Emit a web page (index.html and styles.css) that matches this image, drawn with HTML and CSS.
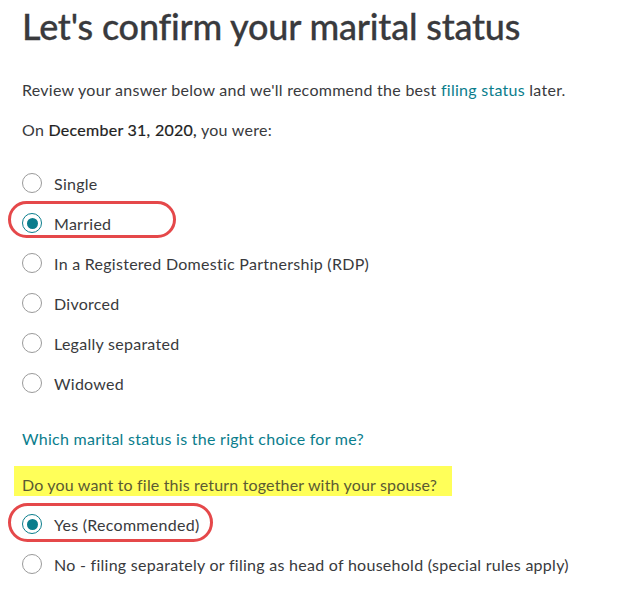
FILE: index.html
```html
<!DOCTYPE html>
<html lang="en">
<head>
    <meta charset="UTF-8">
    <meta name="viewport" content="width=device-width, initial-scale=1.0">
    <title>Marital status</title>
    <link rel="stylesheet" href="styles.css">
</head>
<body>
    <div class="page">
        <h1>Let's confirm your marital status</h1>

        <p class="intro">Review your answer below and we'll recommend the best <a href="#">filing status</a> later.</p>

        <p class="question">On <strong>December 31, 2020,</strong> you were:</p>

        <div class="options">
            <label class="option"><span class="radio"></span>Single</label>
            <label class="option"><span class="radio checked"></span>Married<span class="mark mark-married"></span></label>
            <label class="option"><span class="radio"></span>In a Registered Domestic Partnership (RDP)</label>
            <label class="option"><span class="radio"></span>Divorced</label>
            <label class="option"><span class="radio"></span>Legally separated</label>
            <label class="option"><span class="radio"></span>Widowed</label>
        </div>

        <a class="help" href="#">Which marital status is the right choice for me?</a>

        <div class="highlight">Do you want to file this return together with your spouse?</div>

        <div class="options">
            <label class="option"><span class="radio checked"></span>Yes (Recommended)<span class="mark mark-yes"></span></label>
            <label class="option"><span class="radio"></span>No - filing separately or filing as head of household (special rules apply)</label>
        </div>
    </div>
</body>
</html>
```

FILE: styles.css
```css
body {
    margin: 0;
    background: #fff;
    font-family: Lato, "Noto Sans", sans-serif;
    font-size: 16px;
    letter-spacing: 0.27px;
    color: #393a3d;
}

.page {
    padding: 0 0 0 22px;
}

h1 {
    margin: 0;
    padding-top: 4px;
    font-size: 36px;
    font-weight: 500;
    line-height: 44px;
    letter-spacing: -0.2px;
    -webkit-text-stroke: 0.3px #393a3d;
}

.intro {
    margin: 32px 0 0;
    line-height: 20px;
}

.intro a,
.help {
    color: #0a7d8c;
    text-decoration: none;
}

.question {
    margin: 20px 0 0;
    line-height: 20px;
}

.question strong {
    font-weight: 400;
    color: #222;
    -webkit-text-stroke: 0.2px #222;
}

.options {
    display: flex;
    flex-direction: column;
    margin-top: 23px;
}

.option {
    position: relative;
    display: flex;
    align-items: center;
    gap: 12px;
    height: 40px;
}

.radio {
    box-sizing: border-box;
    width: 20px;
    height: 20px;
    border: 1.5px solid #9a9a9a;
    border-radius: 50%;
    display: flex;
    align-items: center;
    justify-content: center;
}

.radio.checked {
    border: 1px solid #0a7d8c;
}

.radio.checked::after {
    content: "";
    width: 11px;
    height: 11px;
    border-radius: 50%;
    background: #0a7d8c;
}

/* red annotation rings drawn over the chosen answers */
.mark {
    position: absolute;
    left: -14px;
    border: 3px solid #e5484a;
    border-radius: 20px;
    box-sizing: border-box;
}

.mark-married {
    top: -2px;
    width: 168px;
    height: 37px;
}

.mark-yes {
    top: -1px;
    width: 205px;
    height: 39px;
}

.help {
    display: block;
    margin-top: 26px;
    line-height: 20px;
}

.highlight {
    margin: 17px 0 0 -8px;
    width: 438px;
    padding: 9px 0 1px 8px;
    box-sizing: border-box;
    background: #ffff59;
    color: #5b5a33;
    line-height: 20px;
    letter-spacing: 0.17px;
    white-space: nowrap;
}

.highlight + .options {
    margin-top: 8px;
}
```
